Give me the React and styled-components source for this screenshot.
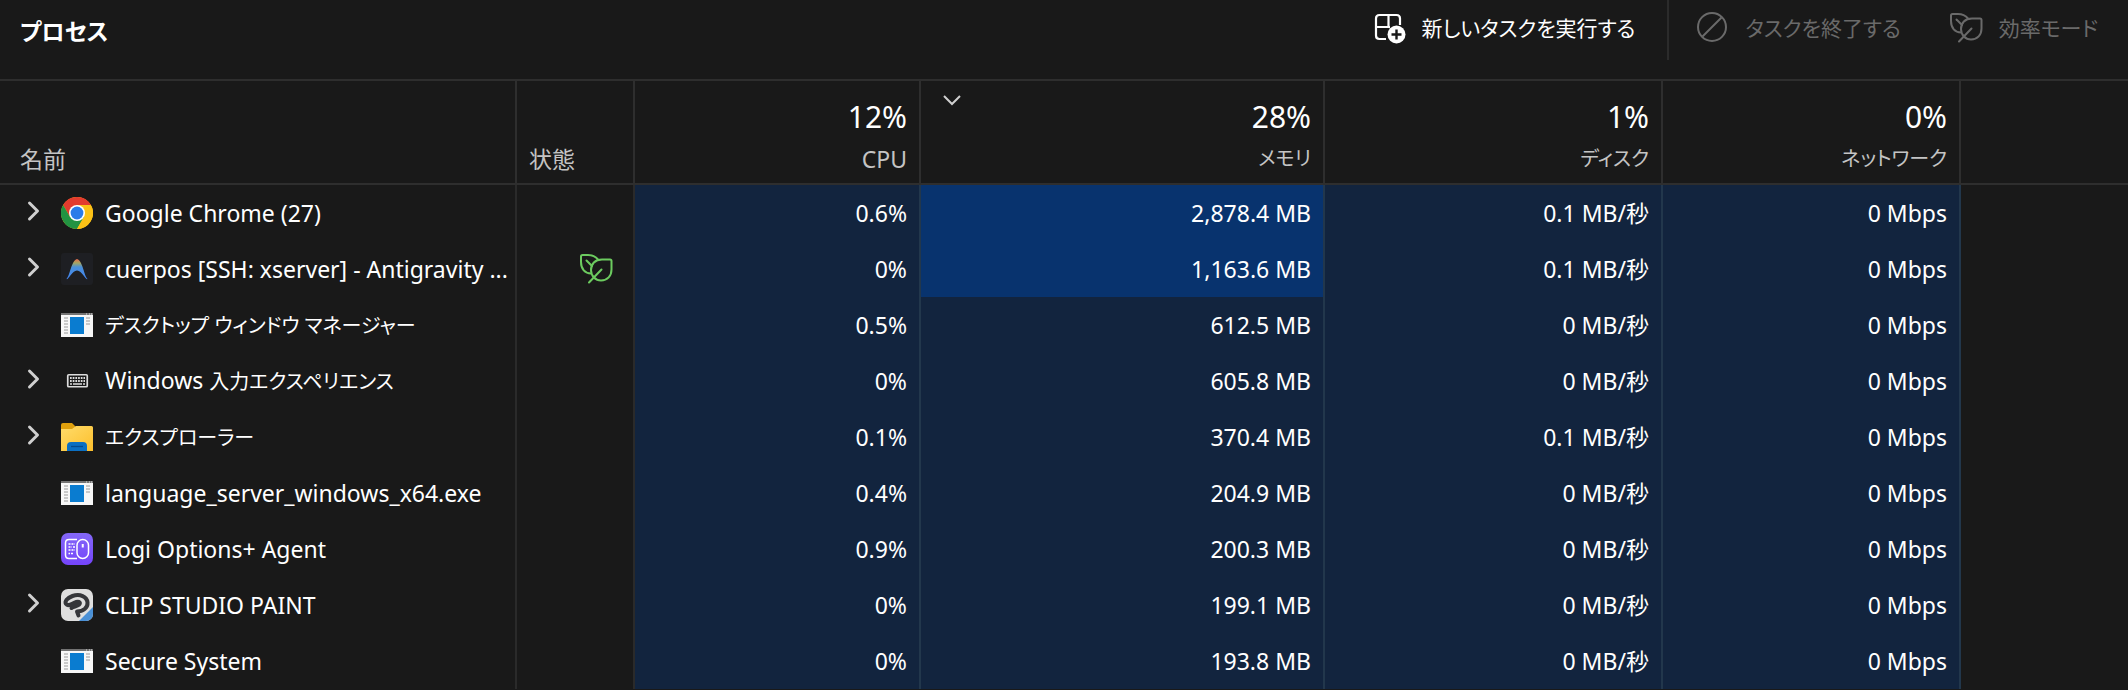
import React from 'react';
import styled, { createGlobalStyle } from 'styled-components';

const Global = createGlobalStyle`
  *, *::before, *::after { box-sizing: border-box; }
  body {
    margin: 0;
    background: #191919;
    color: #fff;
    font-family: 'Noto Sans', 'Noto Sans CJK JP', sans-serif;
    font-feature-settings: 'palt';
    font-size: 23px;
    line-height: 32px;
  }
`;

const Page = styled.main`
  min-height: 100vh;
  overflow-x: hidden;
`;

const Toolbar = styled.header`
  display: flex;
  align-items: flex-start;
  justify-content: space-between;
  height: 79px;
  padding: 0 20px;
`;

const Title = styled.h1`
  margin: 0;
  padding-top: 15px;
  font-size: 23px;
  line-height: 32px;
  font-weight: 700;
`;

const Actions = styled.div`
  display: flex;
  height: 60px;
  font-size: 21px;
`;

const ActionGroup = styled.div`
  display: flex;
  gap: 48px;
  padding: 0 32px 0 28px;
  & + & { border-left: 2px solid #2b2b2b; padding-right: 10px; }
`;

const ActionButton = styled.button`
  display: flex;
  align-items: center;
  gap: 16px;
  height: 56px;
  padding: 0;
  border: 0;
  background: none;
  color: #fff;
  font: inherit;
  font-feature-settings: inherit;
  white-space: nowrap;
  &:disabled { color: #6a6a6a; }
`;

const Table = styled.table`
  width: 100%;
  table-layout: fixed;
  border-collapse: separate;
  border-spacing: 0;
  border-top: 2px solid #2e2e2e;
`;

const Col = styled.col`
  width: ${(p) => (p.$width ? `${p.$width}px` : 'auto')};
`;

const HeadCell = styled.th`
  position: relative;
  height: 104px;
  padding: 0 12px 8px ${(p) => (p.$first ? 20 : 12)}px;
  border-right: ${(p) => (p.$last ? 0 : 2)}px solid #2e2e2e;
  border-bottom: 2px solid #2e2e2e;
  vertical-align: bottom;
  text-align: ${(p) => (p.$metric ? 'right' : 'left')};
  font-weight: 400;
  color: #c4c4c4;
`;

const Label = styled.div`
  font-size: ${(p) => (p.$kana ? 20 : 23)}px;
`;

const Total = styled.div`
  margin-bottom: 8px;
  font-size: 30px;
  line-height: 36px;
  color: #fff;
`;

const SortMark = styled.svg`
  position: absolute;
  top: 12px;
  left: 22px;
`;

const Cell = styled.td`
  height: 56px;
  padding: 0 12px;
  border-right: ${(p) => (p.$last ? 0 : 2)}px solid ${(p) => (p.$level ? '#22374c' : '#2a2a2a')};
  background: ${(p) => ({ low: '#12243e', high: '#08336e' }[p.$level] || 'transparent')};
  text-align: right;
  white-space: nowrap;
`;

const NameCell = styled(Cell)`
  padding-left: 24px;
  text-align: left;
`;

const NameLine = styled.div`
  display: flex;
  align-items: center;
`;

const Expander = styled.button`
  display: flex;
  flex: none;
  width: 37px;
  padding: 0 0 4px;
  border: 0;
  background: none;
`;

const Indent = styled.span`
  flex: none;
  width: 37px;
`;

const IconBox = styled.span`
  display: flex;
  flex: none;
  width: 44px;
`;

const Name = styled.span`
  overflow: hidden;
  text-overflow: ellipsis;
  font-size: ${(p) => (p.$kana ? 20 : 23)}px;
`;

const StatusIcon = styled.span`
  display: flex;
  justify-content: flex-end;
  padding-right: 8px;
`;

const Chevron = () => (
  <svg width="18" height="22" viewBox="0 0 18 22" fill="none" stroke="#d0d0d0" strokeWidth="3" strokeLinecap="round" strokeLinejoin="round">
    <path d="M5.500 3L13.500 11L5.500 19" />
  </svg>
);

const LeafIcon = ({ color = 'currentColor' }) => (
  <svg width="34" height="32" viewBox="0 0 34 32" fill="none" stroke={color} strokeWidth="2" strokeLinecap="round" strokeLinejoin="round">
    <path d="M19 6.500C16.500 3.500 14 2 9 2H3.500Q2 2 2 3.500V9C2 16 6 20.500 12 20.500" />
    <path d="M7.500 7.500L13 13" />
    <path d="M31 6.500H23C16 6.500 12 11 12 17C12 23 16.500 27.500 22 27.500C28.500 27.500 32.500 23 32.500 16.500V8Q32.500 6.500 31 6.500Z" />
    <path d="M10 29.500L22.500 16.500" />
  </svg>
);

const NewTaskIcon = () => (
  <svg width="32" height="32" viewBox="0 0 32 32" fill="none">
    <path d="M12 27H5.500Q2 27 2 23.500V6.500Q2 3 5.500 3H22.500Q26 3 26 6.500V13M14.500 3V15M2 15H16" stroke="currentColor" strokeWidth="2.200" />
    <circle cx="22.500" cy="22.500" r="9" fill="currentColor" />
    <path d="M22.500 17.500V27.500M17.500 22.500H27.500" stroke="#191919" strokeWidth="2.400" />
  </svg>
);

const BlockIcon = () => (
  <svg width="32" height="32" viewBox="0 0 32 32" fill="none" stroke="currentColor" strokeWidth="2">
    <circle cx="15" cy="15" r="14" />
    <path d="M5.500 24.500L24.500 5.500" />
  </svg>
);

const ChromeIcon = () => (
  <svg width="32" height="32" viewBox="0 0 32 32">
    <circle cx="16" cy="16" r="16" fill="#fbc116" />
    <path d="M16 8H29.860A16 16 0 0 0 2.140 8L9.070 20L16 8Z" fill="#e33b2e" />
    <path d="M2.140 8A16 16 0 0 0 16 32L22.930 20H9.070Z" fill="#229342" />
    <path d="M16 8H29.860A16 16 0 0 1 16 32L22.930 20Z" fill="#fbc116" />
    <circle cx="16" cy="16" r="8" fill="#fff" />
    <circle cx="16" cy="16" r="6.400" fill="#2a7be9" />
  </svg>
);

const AntigravityIcon = () => (
  <svg width="32" height="32" viewBox="0 0 32 32">
    <defs>
      <linearGradient id="arch" x1="0" y1="0" x2="0" y2="1">
        <stop offset="0" stopColor="#e8694a" />
        <stop offset="0.200" stopColor="#a3a763" />
        <stop offset="0.400" stopColor="#4a90d9" />
        <stop offset="1" stopColor="#4285f4" />
      </linearGradient>
    </defs>
    <rect width="32" height="32" rx="3" fill="#1e1f23" />
    <path d="M5.500 26C9 23 10 8 16 6C22 8 23 23 26.500 26C24.500 27.500 21.500 18 16 17.500C10.500 18 7.500 27.500 5.500 26Z" fill="url(#arch)" />
  </svg>
);

const WindowIcon = () => (
  <svg width="32" height="24" viewBox="0 0 32 24">
    <rect width="32" height="24" fill="#f7f7f7" />
    <rect width="32" height="2" fill="#737373" />
    <path d="M25 1H26M28 1H29M30 1H31" stroke="#ddd" />
    <rect x="9" y="4" width="14" height="17" fill="#0a7cd0" />
    <path d="M3 5H7M3 8H7M3 11H7M3 14H7M3 17H7M3 20H7M25 5H29M25 8H29M25 11H29" stroke="#9a9a9a" />
  </svg>
);

const KeyboardIcon = () => (
  <svg width="32" height="32" viewBox="0 0 32 32" fill="none" stroke="#dcdcdc">
    <rect x="6.750" y="9.750" width="19.500" height="12" rx="1" strokeWidth="1.700" />
    <path d="M9 13H24M9 16H24" strokeWidth="2" strokeDasharray="1.700 1" />
    <path d="M9 19H11M12 19H21M22 19H24" strokeWidth="1.500" />
  </svg>
);

const FolderIcon = () => (
  <svg width="32" height="28" viewBox="0 0 32 28">
    <defs>
      <linearGradient id="folder" x1="0" y1="0" x2="1" y2="1">
        <stop offset="0" stopColor="#ffdc6b" />
        <stop offset="1" stopColor="#fcbf2c" />
      </linearGradient>
    </defs>
    <path d="M0 2Q0 0 2 0H11L15 4V9H0Z" fill="#dfa00d" />
    <path d="M0 6H11L15 3H30.500Q32 3 32 4.500V28H0Z" fill="url(#folder)" />
    <path d="M6 28V23Q6 19 10 19H22Q26 19 26 23V28Z" fill="#0b6fc2" />
    <path d="M10 23.500H22" stroke="#064a8c" strokeWidth="1.300" />
  </svg>
);

const LogiIcon = () => (
  <svg width="32" height="32" viewBox="0 0 32 32" fill="none" stroke="#fff" strokeWidth="1.500">
    <defs>
      <linearGradient id="logi" x1="0" y1="0" x2="0" y2="1">
        <stop offset="0" stopColor="#8468f7" />
        <stop offset="1" stopColor="#7444fb" />
      </linearGradient>
    </defs>
    <rect width="32" height="32" rx="7" fill="url(#logi)" stroke="none" />
    <path d="M16 6.500H8Q4.500 6.500 4.500 10V22Q4.500 25.500 8 25.500H16" />
    <rect x="16" y="6.500" width="11.500" height="19" rx="5.750" />
    <path d="M21.750 11V14.500" strokeWidth="2" />
    <path d="M7.500 11H14M7.500 14H11M12 14H14M7.500 17H14M7.500 20.500H9M10 20.500H13" strokeWidth="1.500" strokeDasharray="2 1" />
  </svg>
);

const ClipStudioIcon = () => (
  <svg width="32" height="32" viewBox="0 0 32 32">
    <defs>
      <clipPath id="tile"><rect width="32" height="32" rx="7" /></clipPath>
    </defs>
    <g clipPath="url(#tile)">
      <rect width="32" height="32" fill="#dedede" />
      <path d="M32 18V32H18Z" fill="#4a90d6" />
    </g>
    <path d="M17.500 26.500L16 22.500C22 22.500 27 19 26.500 13.500C26 7.500 19 4.500 11.500 7C6 9 3.500 12.500 5 15C7 18 11 14.500 15 13C18.500 12 20 14 18 15.800C16 17.500 12 17.500 10.500 19" fill="none" stroke="#35363a" strokeWidth="4" strokeLinecap="round" strokeLinejoin="round" />
  </svg>
);

const icons = {
  chrome: ChromeIcon,
  antigravity: AntigravityIcon,
  window: WindowIcon,
  keyboard: KeyboardIcon,
  folder: FolderIcon,
  logi: LogiIcon,
  clip: ClipStudioIcon,
};

const columns = [
  { label: '名前', width: 517 },
  { label: '状態', width: 118 },
  { label: 'CPU', total: '12%', width: 286 },
  { label: 'メモリ', total: '28%', width: 404, sorted: true },
  { label: 'ディスク', total: '1%', width: 338 },
  { label: 'ネットワーク', total: '0%', width: 298 },
];

const processes = [
  { name: 'Google Chrome (27)', icon: 'chrome', group: true, values: ['0.6%', '2,878.4 MB', '0.1 MB/秒', '0 Mbps'], heavy: true },
  { name: 'cuerpos [SSH: xserver] - Antigravity ...', icon: 'antigravity', group: true, eco: true, values: ['0%', '1,163.6 MB', '0.1 MB/秒', '0 Mbps'], heavy: true },
  { name: 'デスクトップ ウィンドウ マネージャー', icon: 'window', values: ['0.5%', '612.5 MB', '0 MB/秒', '0 Mbps'] },
  { name: 'Windows 入力エクスペリエンス', icon: 'keyboard', group: true, values: ['0%', '605.8 MB', '0 MB/秒', '0 Mbps'] },
  { name: 'エクスプローラー', icon: 'folder', group: true, values: ['0.1%', '370.4 MB', '0.1 MB/秒', '0 Mbps'] },
  { name: 'language_server_windows_x64.exe', icon: 'window', values: ['0.4%', '204.9 MB', '0 MB/秒', '0 Mbps'] },
  { name: 'Logi Options+ Agent', icon: 'logi', values: ['0.9%', '200.3 MB', '0 MB/秒', '0 Mbps'] },
  { name: 'CLIP STUDIO PAINT', icon: 'clip', group: true, values: ['0%', '199.1 MB', '0 MB/秒', '0 Mbps'] },
  { name: 'Secure System', icon: 'window', values: ['0%', '193.8 MB', '0 MB/秒', '0 Mbps'] },
];

const KATAKANA = /[ァ-ヶー]/;
const isKana = (text) => KATAKANA.test(text);

// A mixed name keeps each script at its own size.
const splitScripts = (text) => text.split(/(?<=[A-Za-z] )(?=[^\x00-\x7F])/);

function ProcessRow({ process }) {
  const Icon = icons[process.icon];
  return (
    <tr>
      <NameCell>
        <NameLine>
          {process.group ? <Expander type="button" aria-label={process.name}><Chevron /></Expander> : <Indent />}
          <IconBox><Icon /></IconBox>
          <div>
            {splitScripts(process.name).map((part) => (
              <Name key={part} $kana={isKana(part)}>{part}</Name>
            ))}
          </div>
        </NameLine>
      </NameCell>
      <Cell>{process.eco && <StatusIcon><LeafIcon color="#6ccb5f" /></StatusIcon>}</Cell>
      {process.values.map((value, i) => (
        <Cell key={columns[i + 2].label} $level={process.heavy && columns[i + 2].sorted ? 'high' : 'low'}>{value}</Cell>
      ))}
      <Cell $last />
    </tr>
  );
}

export default function App() {
  return (
    <Page>
      <Global />
      <Toolbar>
        <Title>プロセス</Title>
        <Actions>
          <ActionGroup>
            <ActionButton type="button"><NewTaskIcon />新しいタスクを実行する</ActionButton>
          </ActionGroup>
          <ActionGroup>
            <ActionButton type="button" disabled><BlockIcon />タスクを終了する</ActionButton>
            <ActionButton type="button" disabled><LeafIcon />効率モード</ActionButton>
          </ActionGroup>
        </Actions>
      </Toolbar>
      <Table>
        <colgroup>
          {columns.map((c) => <Col key={c.label} $width={c.width} />)}
          <Col />
        </colgroup>
        <thead>
          <tr>
            {columns.map((c, i) => (
              <HeadCell key={c.label} scope="col" $first={i === 0} $metric={Boolean(c.total)}>
                {c.sorted && (
                  <SortMark width="18" height="14" viewBox="0 0 18 14" fill="none" stroke="#d0d0d0" strokeWidth="2">
                    <path d="M1 3L9 11L17 3" />
                  </SortMark>
                )}
                {c.total && <Total>{c.total}</Total>}
                <Label $kana={isKana(c.label)}>{c.label}</Label>
              </HeadCell>
            ))}
            <HeadCell $last />
          </tr>
        </thead>
        <tbody>
          {processes.map((p) => <ProcessRow key={p.name} process={p} />)}
        </tbody>
      </Table>
    </Page>
  );
}
